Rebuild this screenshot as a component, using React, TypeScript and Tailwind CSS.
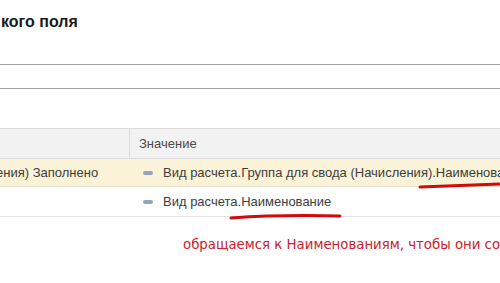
export default function App() {
  return (
    <div className="relative w-[500px] h-[283px] overflow-hidden bg-white font-['Liberation_Sans',Arial,sans-serif]">
      {/* Title */}
      <div className="h-[64px] pl-[1px] pt-[12px]">
        <h1 className="text-[16px] leading-[20px] font-bold text-[#1a1a1a]">кого поля</h1>
      </div>

      {/* Empty field */}
      <div className="h-[25px] border-y border-[#a3a3a3]" />

      <div className="h-[39px]" />

      {/* Table */}
      <div className="text-[13px] text-[#3d3d3d]">
        <div className="flex h-[31px] border-y border-[#dcdcdc] bg-[#f2f2f2]">
          <div className="w-[130px] shrink-0 border-r border-[#dcdcdc]" />
          <div className="flex items-center pl-[9px] text-[#4a4a4a]">Значение</div>
        </div>
        <div className="flex h-[28px] border-b border-[#e6e0cc] bg-[#fbf3d7]">
          <div className="w-[130px] shrink-0 flex items-center overflow-hidden whitespace-nowrap">
            <span className="-ml-[4px]">ения) Заполнено</span>
          </div>
          <div className="flex items-center whitespace-nowrap pl-[13px]">
            <span className="mr-[10px] h-[4px] w-[10px] rounded-full bg-[#8fa6bd]" />
            Вид расчета.Группа для свода (Начисления).Наименование
          </div>
        </div>
        <div className="flex h-[30px] border-b border-[#e3e3e3]">
          <div className="w-[130px] shrink-0" />
          <div className="flex items-center whitespace-nowrap pl-[13px]">
            <span className="mr-[10px] h-[4px] w-[10px] rounded-full bg-[#8fa6bd]" />
            Вид расчета.Наименование
          </div>
        </div>
      </div>

      {/* Annotation */}
      <p className="mt-[18px] pl-[183px] whitespace-nowrap text-[13.3px] text-[#d0202a] font-['DejaVu_Sans',sans-serif]">
        обращаемся к Наименованиям, чтобы они со
      </p>

      {/* Red underlines drawn over the table */}
      <svg className="absolute left-0 top-0" width="500" height="283" viewBox="0 0 500 283" fill="none">
        <path d="M420 187 C450 186 480 185 500 184" stroke="#d10a0a" strokeWidth="3" strokeLinecap="round" />
        <path d="M231 218 C260 216 300 215 340 216" stroke="#d10a0a" strokeWidth="3" strokeLinecap="round" />
      </svg>
    </div>
  )
}
